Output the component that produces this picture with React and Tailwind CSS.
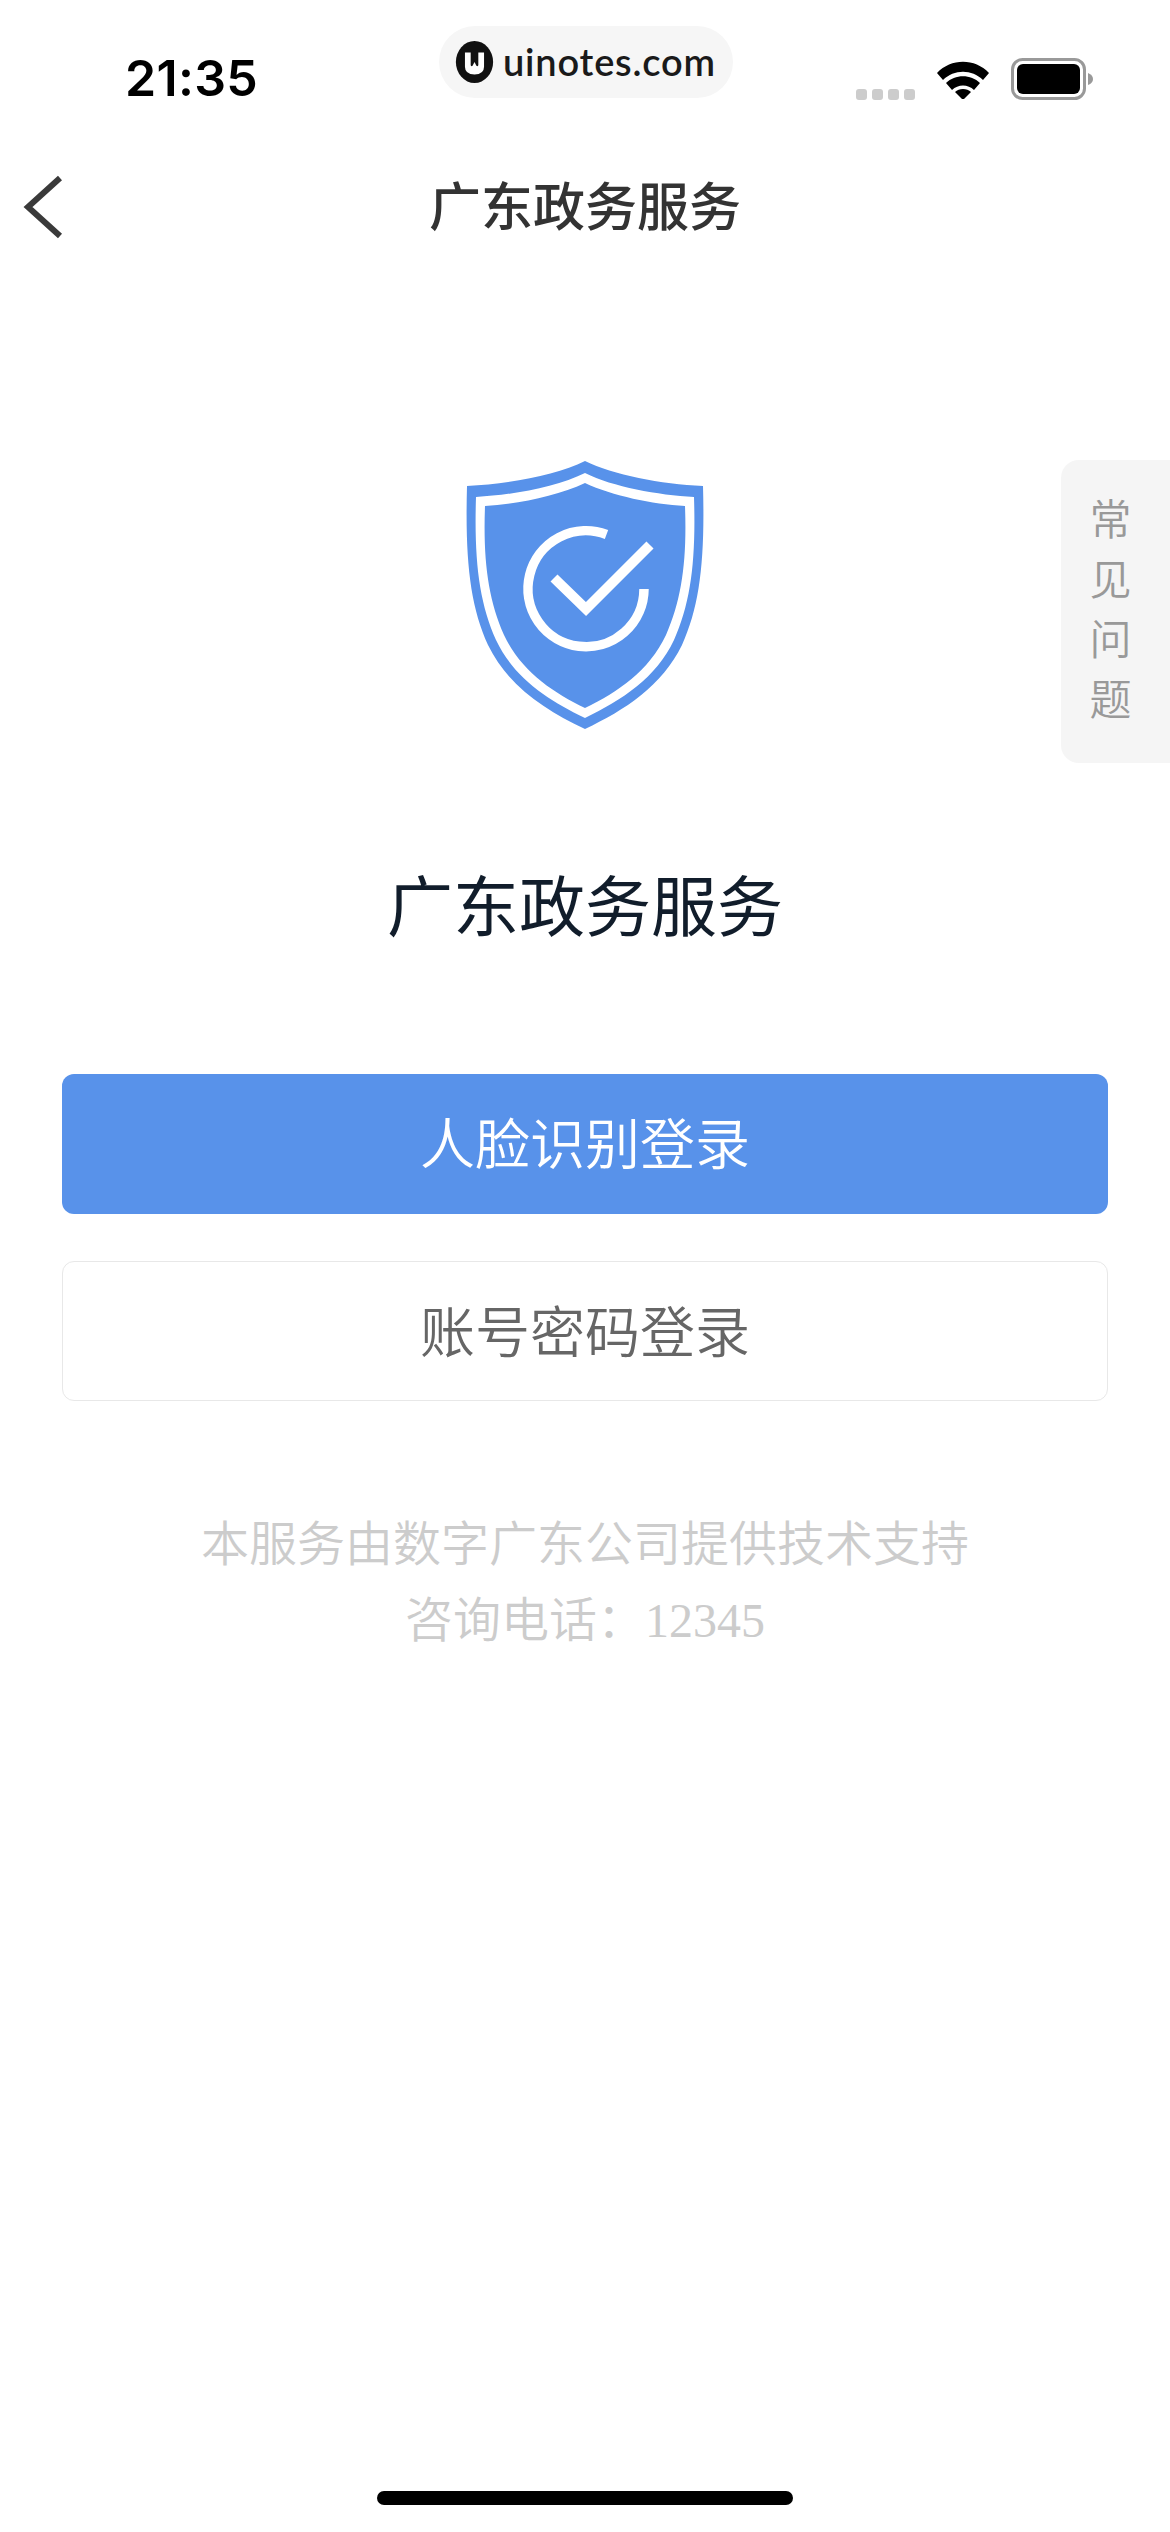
import React from "react";

const cjk = "font-['Noto_Sans_CJK_SC','Noto_Sans',sans-serif]";

const ShieldIcon = () => (
    <svg viewBox="36 31 238 268" className="w-[238px] h-[268px]">
        <path
            fill="#5892ea"
            d="M155 31C183 45 231 54 273 56C275 130 270 175 252 215C232 256 195 280 155 299C115 280 78 256 58 215C40 175 35 130 37 56C79 54 127 45 155 31Z"
        />
        <path
            fill="#fff"
            d="M155 43C183 57 228 65 264 67C266 130 261 172 244 210C226 248 192 270 155 288C118 270 84 248 66 210C49 172 44 130 46 67C82 65 127 57 155 43Z"
        />
        <path
            fill="#5892ea"
            d="M155 53C183 66 222 74 255 76C257 130 252 168 236 205C219 241 188 262 155 278C122 262 91 241 74 205C58 168 53 130 55 76C88 74 127 66 155 53Z"
        />
        <path
            fill="none"
            stroke="#fff"
            strokeWidth="9.5"
            d="M176.5 104.5A58 58 0 1 0 214 159"
        />
        <path
            fill="none"
            stroke="#fff"
            strokeWidth="10"
            d="M124 148L156 179L220 115"
        />
    </svg>
);

const StatusBar = () => (
    <div className="flex items-start h-[150px] pt-[26px]">
        <span className="w-[439px] pl-[125px] pt-[30px] text-[50px] leading-[44px] font-semibold text-black font-['Inter',sans-serif] tracking-[0.3px]">
            21:35
        </span>
        <div className="flex items-center w-[294px] h-[72px] rounded-full bg-[#f6f6f6] pl-[16px] gap-[9px]">
            <svg viewBox="0 0 40 44" className="w-[39px] h-[42px]">
                <ellipse cx="20" cy="22" rx="19.5" ry="22" fill="#111" />
                <path
                    fill="#fff"
                    d="M10 12h6v13q0 2 2 1l2-4 2 4q2 1 2-1V12h6v15q0 8-10 8T10 27Z"
                />
            </svg>
            <span className="pb-[2px] text-[38px] leading-none font-semibold text-[#1a1a1a] font-['Lato',sans-serif] tracking-[0.8px]">
                uinotes.com
            </span>
        </div>
        <div className="flex items-center pl-[123px] pt-[31px] gap-[5px]">
            {[1, 2, 3, 4].map((i) => (
                <span
                    key={i}
                    className="w-[11px] h-[11px] rounded-[3px] bg-[#cccccc] mt-[32px]"
                />
            ))}
            <svg viewBox="0 0 52 40" className="w-[52px] h-[40px] ml-[17px]">
                <path
                    d="M0 14C14 -1 38 -1 52 14L46 21C35 10 17 10 6 21Z"
                    fill="#000"
                />
                <path
                    d="M9 24C18 15 34 15 43 24L37 31C31 25 21 25 15 31Z"
                    fill="#000"
                />
                <path d="M18 33C22 29 30 29 34 33L26 41Z" fill="#000" />
            </svg>
            <svg viewBox="0 0 82 42" className="w-[82px] h-[42px] ml-[17px]">
                <rect
                    x="1.5"
                    y="1.5"
                    width="72"
                    height="39"
                    rx="10"
                    fill="none"
                    stroke="#999"
                    strokeWidth="3"
                />
                <rect x="6" y="6" width="63" height="30" rx="6" fill="#000" />
                <path d="M77 15q5 2 5 6t-5 6Z" fill="#999" />
            </svg>
        </div>
    </div>
);

const App = () => {
    return (
        <div
            className={`relative flex flex-col min-h-[2532px] bg-white overflow-hidden ${cjk}`}>
            <StatusBar />

            <div className="relative flex items-center justify-center h-[108px]">
                <svg
                    viewBox="0 0 40 64"
                    className="absolute left-[23px] top-[25px] w-[40px] h-[64px]">
                    <path
                        d="M37 3L5 32L37 61"
                        fill="none"
                        stroke="#3a3a3a"
                        strokeWidth="6"
                    />
                </svg>
                <p className="text-[52px] leading-none font-medium text-[#333333]">
                    广东政务服务
                </p>
            </div>

            <div className="flex flex-col items-center pt-[203px]">
                <ShieldIcon />
                <p className="mt-[140px] text-[66px] leading-none text-[#111d2b]">
                    广东政务服务
                </p>
            </div>

            <div className="flex flex-col gap-[47px] px-[62px] mt-[139px]">
                <button className="h-[140px] pb-[7px] rounded-[12px] bg-[#5892ea] text-white text-[55px] font-[350]">
                    人脸识别登录
                </button>
                <button className="h-[140px] pb-[5px] rounded-[12px] border border-[#e8e8e8] bg-white text-[#666666] text-[55px] font-[350]">
                    账号密码登录
                </button>
            </div>

            <div className="mt-[101px] text-center text-[48px] leading-[76px] font-[350] text-[#cccccc]">
                <p>本服务由数字广东公司提供技术支持</p>
                <p>
                    咨询电话：
                    <span className="font-['Liberation_Serif',serif]">
                        12345
                    </span>
                </p>
            </div>

            <div className="mt-auto flex justify-center pb-[27px]">
                <span className="w-[416px] h-[14px] rounded-full bg-black" />
            </div>

            {/* faq tab sits over the page on the right edge */}
            <div className="absolute right-0 top-[460px] w-[109px] h-[303px] pr-[10px] pb-[10px] rounded-l-[18px] bg-[#f5f5f5] flex flex-col items-center justify-center text-[42px] leading-[60px] font-[350] text-[#999999]">
                <span>常</span>
                <span>见</span>
                <span>问</span>
                <span>题</span>
            </div>
        </div>
    );
};

export default App;
